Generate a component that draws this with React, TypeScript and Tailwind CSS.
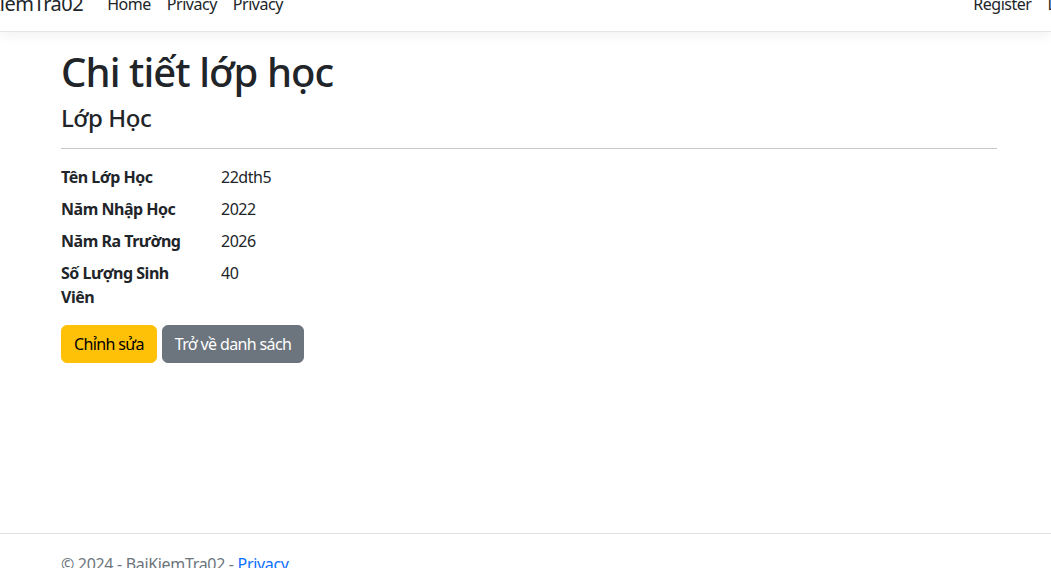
const rows: Array<{ label: string; value: string }> = [
  { label: "Tên Lớp Học", value: "22dth5" },
  { label: "Năm Nhập Học", value: "2022" },
  { label: "Năm Ra Trường", value: "2026" },
  { label: "Số Lượng Sinh Viên", value: "40" },
];

const Navbar: React.FC = () => {
  return (
    <header className="h-[32px] border-b border-[#e5e5e5] shadow-[0_4px_12px_rgba(0,0,0,0.05)] bg-white overflow-hidden">
      <div className="flex flex-row items-center justify-between -mt-[8px] h-[24px]">
        <div className="flex flex-row items-center">
          <span className="text-[20px] leading-[24px] text-[#212529] ml-[-40px] mr-[24px] whitespace-nowrap">
            BaiKiemTra02
          </span>
          <nav className="flex flex-row items-center gap-x-[16px] text-[16px] leading-[24px] text-[#212529]">
            <a>Home</a>
            <a>Privacy</a>
            <a>Privacy</a>
          </nav>
        </div>
        <div className="flex flex-row items-center gap-x-[16px] text-[16px] leading-[24px] text-[#212529] mr-[-36px]">
          <a>Register</a>
          <a>Login</a>
        </div>
      </div>
    </header>
  );
};

export default function App() {
  return (
    <div
      className="relative h-[568px] overflow-hidden bg-white text-[#212529] tracking-[-0.03em]"
      style={{ fontFamily: '"Noto Sans", sans-serif' }}
    >
      <Navbar />
      <main className="w-[960px] ml-[49px] px-[12px] pt-[16px]">
        <h1 className="text-[40px] leading-[48px] font-medium mb-[8px] tracking-[-0.023em]">
          Chi tiết lớp học
        </h1>
        <div>
          <h4 className="text-[24px] leading-[28px] font-medium">Lớp Học</h4>
          <hr className="my-[16px] border-t border-[#c8c8c8]" />
          <dl className="grid grid-cols-[160px_1fr] -mx-[12px] text-[16px] leading-[24px]">
            {rows.map((r) => (
              <>
                <dt key={r.label} className="px-[12px] font-bold mb-[8px]">
                  {r.label}
                </dt>
                <dd key={r.label + "v"} className="px-[12px] mb-[8px]">
                  {r.value}
                </dd>
              </>
            ))}
          </dl>
        </div>
        <div className="flex flex-row gap-x-[5px] mt-[8px] tracking-[-0.04em]">
          <button className="h-[38px] px-[12px] rounded-[6px] bg-[#ffc107] border border-[#ffc107] text-[#000] text-[16px]">
            Chỉnh sửa
          </button>
          <button className="h-[38px] px-[12px] rounded-[6px] bg-[#6c757d] border border-[#6c757d] text-white text-[16px]">
            Trở về danh sách
          </button>
        </div>
      </main>
      <footer className="absolute left-0 right-0 top-[533px] border-t border-[#dee2e6] leading-[60px] text-[#6c757d] text-[16px] whitespace-nowrap tracking-[-0.02em]">
        <div className="ml-[61px]">
          © 2024 - BaiKiemTra02 - <a className="text-[#0d6efd] underline">Privacy</a>
        </div>
      </footer>
    </div>
  );
}
